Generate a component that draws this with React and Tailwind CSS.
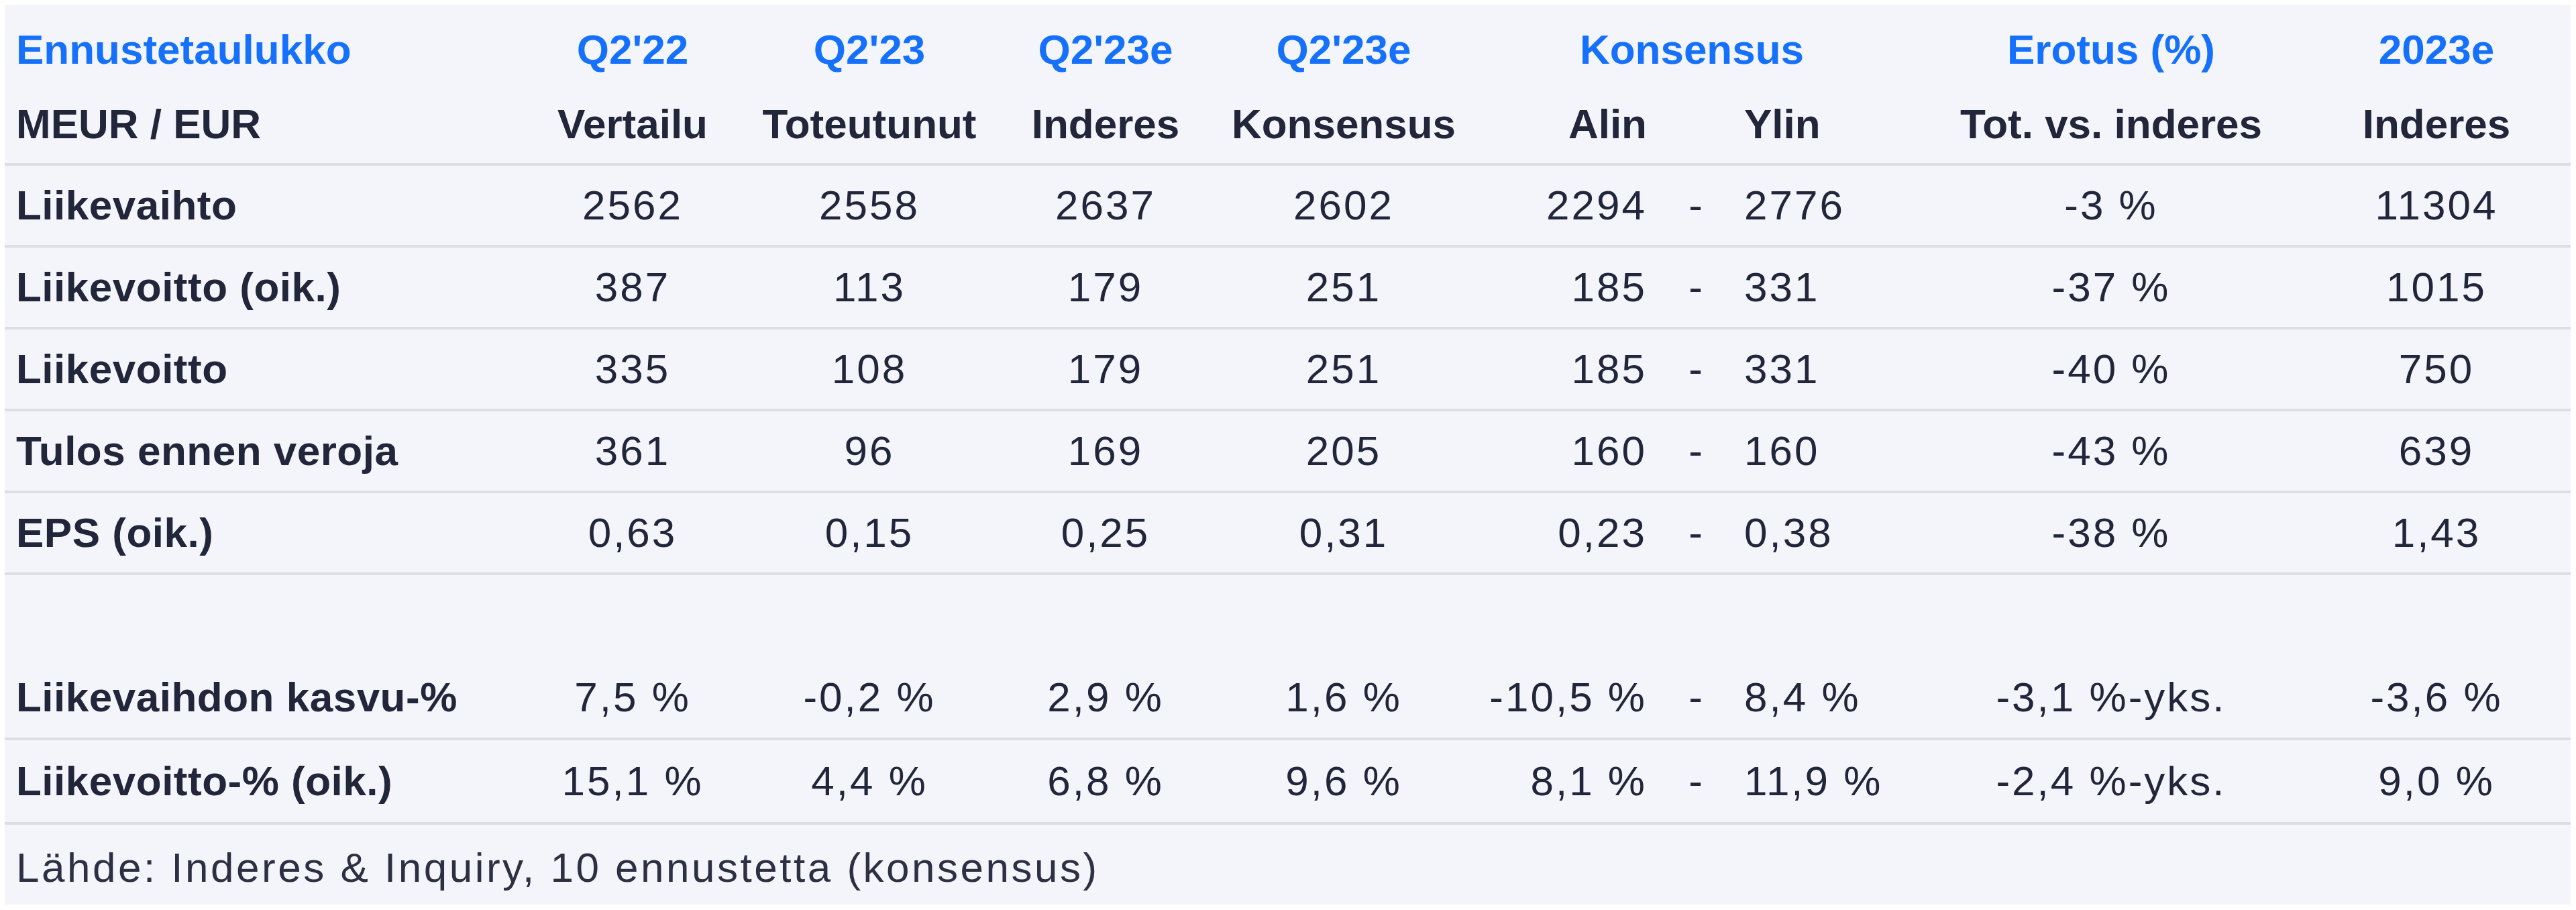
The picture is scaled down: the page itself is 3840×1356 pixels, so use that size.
import React from 'react'

const grid = "grid grid-cols-[763px_346px_360px_344px_366px_269px_145px_280px_534px_418px] items-center"

const rows = [
  ['Liikevaihto', '2562', '2558', '2637', '2602', '2294', '2776', '-3 %', '11304'],
  ['Liikevoitto (oik.)', '387', '113', '179', '251', '185', '331', '-37 %', '1015'],
  ['Liikevoitto', '335', '108', '179', '251', '185', '331', '-40 %', '750'],
  ['Tulos ennen veroja', '361', '96', '169', '205', '160', '160', '-43 %', '639'],
  ['EPS (oik.)', '0,63', '0,15', '0,25', '0,31', '0,23', '0,38', '-38 %', '1,43'],
]

const pctRows = [
  ['Liikevaihdon kasvu-%', '7,5 %', '-0,2 %', '2,9 %', '1,6 %', '-10,5 %', '8,4 %', '-3,1 %-yks.', '-3,6 %'],
  ['Liikevoitto-% (oik.)', '15,1 %', '4,4 %', '6,8 %', '9,6 %', '8,1 %', '11,9 %', '-2,4 %-yks.', '9,0 %'],
]

const DataRow = ({ r, h = 'h-[122px]', border = true }) => (
  <div className={`${grid} ${h} ${border ? 'border-b-4 border-[#dcdee3]' : ''}`}>
    <div className="pl-[17px] font-bold tracking-[0.5px]">{r[0]}</div>
    <div className="text-center tracking-[3px]">{r[1]}</div>
    <div className="text-center tracking-[3px]">{r[2]}</div>
    <div className="text-center tracking-[3px]">{r[3]}</div>
    <div className="text-center tracking-[3px]">{r[4]}</div>
    <div className="text-right tracking-[3px]">{r[5]}</div>
    <div className="text-center">-</div>
    <div className="text-left tracking-[3px]">{r[6]}</div>
    <div className="text-center tracking-[3px]">{r[7]}</div>
    <div className="text-center pl-[18px] tracking-[3px]">{r[8]}</div>
  </div>
)

export default function App() {
  return (
    <div className="w-[3840px] h-[1356px] bg-white p-[7px] pr-[8px] pb-[8px]">
      <div
        className="w-full h-full bg-[#f4f5fa] text-[#22263a] text-[62px] leading-none"
        style={{ fontFamily: '"Liberation Sans", Arial, sans-serif' }}
      >
        {/* Header */}
        <div className={`${grid} h-[120px] pt-[14px] text-[#1570fb] font-bold`}>
          <div className="pl-[17px]">Ennustetaulukko</div>
          <div className="text-center">Q2'22</div>
          <div className="text-center">Q2'23</div>
          <div className="text-center">Q2'23e</div>
          <div className="text-center">Q2'23e</div>
          <div className="col-span-3 text-center pr-[22px]">Konsensus</div>
          <div className="text-center">Erotus (%)</div>
          <div className="text-center pl-[18px]">2023e</div>
        </div>
        <div className={`${grid} h-[120px] font-bold border-b-4 border-[#dcdee3]`}>
          <div className="pl-[17px]">MEUR / EUR</div>
          <div className="text-center">Vertailu</div>
          <div className="text-center">Toteutunut</div>
          <div className="text-center">Inderes</div>
          <div className="text-center">Konsensus</div>
          <div className="text-right">Alin</div>
          <div></div>
          <div className="text-left">Ylin</div>
          <div className="text-center">Tot. vs. inderes</div>
          <div className="text-center pl-[18px]">Inderes</div>
        </div>

        {rows.map((r) => (
          <DataRow key={r[0]} r={r} />
        ))}

        {/* empty spacer row */}
        <div className="h-[122px]"></div>

        <DataRow r={pctRows[0]} h="h-[124px]" />
        <DataRow r={pctRows[1]} h="h-[126px]" />

        <div className="h-[119px] flex items-center pt-[8px] pl-[17px] text-[#2c3042] tracking-[3.5px]">
          Lähde: Inderes &amp; Inquiry, 10 ennustetta (konsensus)
        </div>
      </div>
    </div>
  )
}
